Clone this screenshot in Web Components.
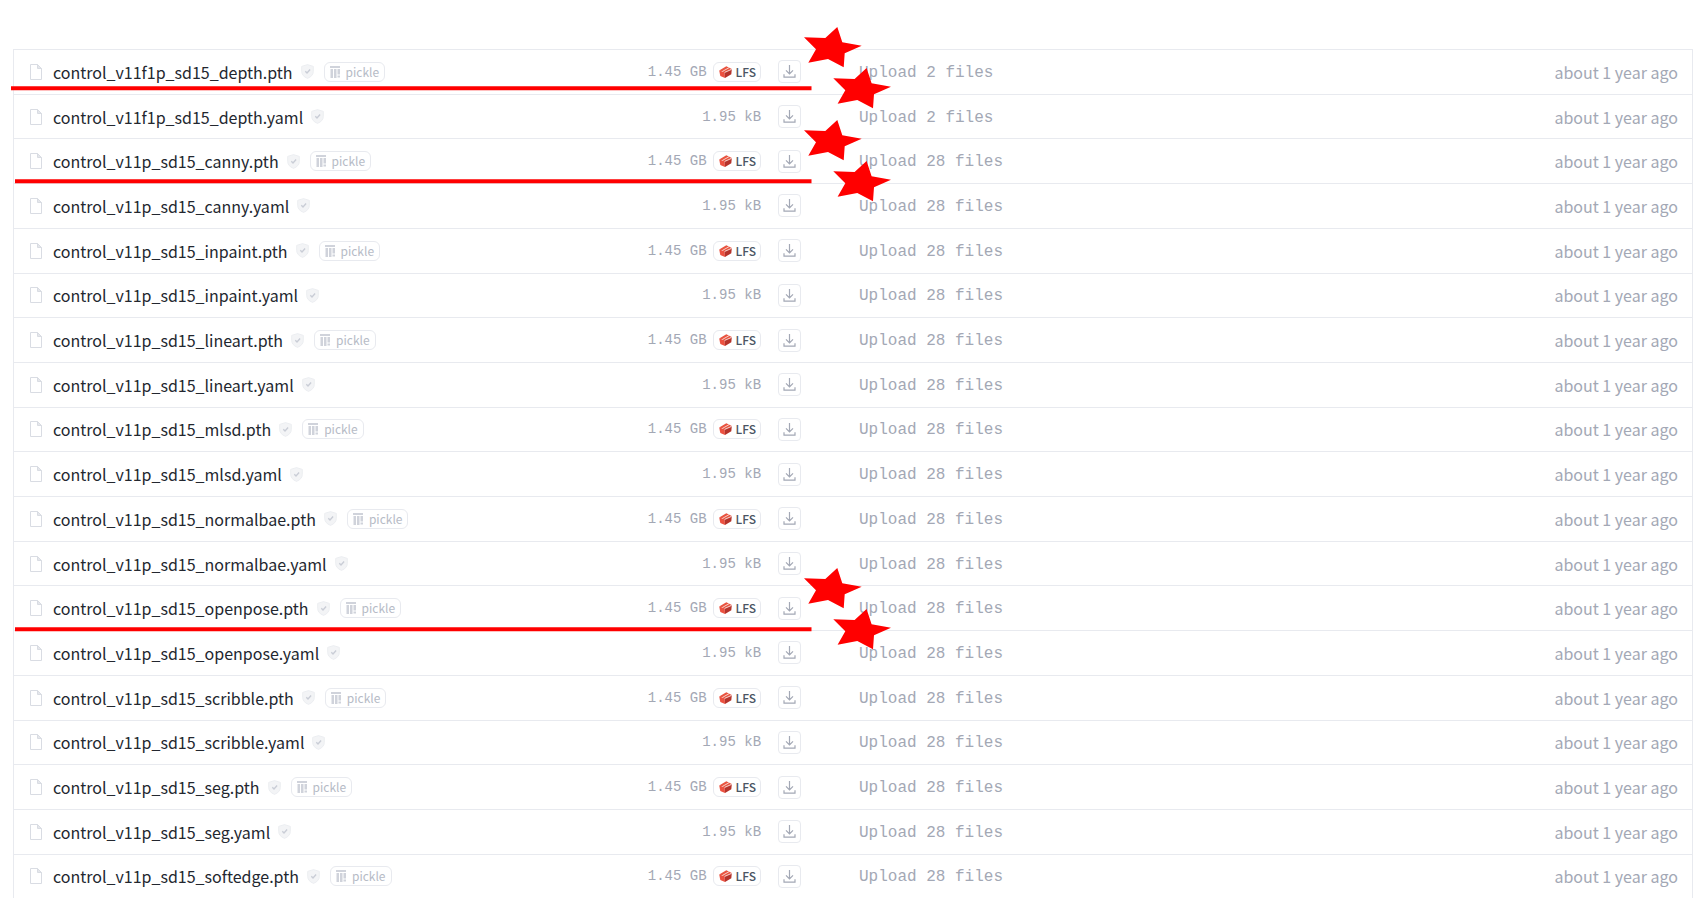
<!DOCTYPE html>
<html lang="en">
<head>
<meta charset="utf-8">
<title>Files</title>
<style>
  body {
    margin: 0;
    padding: 49px 12px 12px 13px;
    background: #fff;
    font-family: "Noto Sans CJK SC", "Open Sans", sans-serif;
  }
</style>
</head>
<body>
<file-list></file-list>
<red-mark style="top: 27px" start="11"></red-mark>
<red-mark style="top: 120px" start="15"></red-mark>
<red-mark style="top: 568px" start="15"></red-mark>

<script>
const define = (name, html) => {
  const template = document.createElement('template');
  template.innerHTML = html;
  customElements.define(name, class extends HTMLElement {
    constructor() {
      super();
      this.attachShadow({ mode: 'open' }).appendChild(template.content.cloneNode(true));
    }
  });
};

define('file-icon', `
  <style>
    :host { display: block; width: 12px; height: 16px; }
    svg { display: block; }
  </style>
  <svg width="12" height="16" viewBox="0 0 12 16" fill="none" stroke="#d9dce3">
    <path d="M.5.5h7l4 4v11H.5z"/>
    <path d="M7.5.5v4h4z" fill="#e5e7eb"/>
  </svg>
`);

define('shield-icon', `
  <style>
    :host { display: block; width: 13px; height: 15px; }
    svg { display: block; }
  </style>
  <svg width="13" height="15" viewBox="0 0 13 15" fill="none">
    <path d="M6.5 .6 12.3 2.4v5q0 4.6-5.8 7Q.7 12 .7 7.400v-5z" fill="#f3f4f6" stroke="#eceef1"/>
    <path d="M4.300 7.200 6 8.900l3.100-3.300" stroke="#c9cdd6" stroke-width="1.400"/>
  </svg>
`);

define('pickle-badge', `
  <style>
    :host {
      display: flex;
      align-items: center;
      gap: 5px;
      height: 18px;
      padding: 0 5px;
      border: 1px solid #e8eaef;
      border-radius: 6px;
      color: #b6bbc6;
      font-size: 12px;
      line-height: 18px;
    }
    svg { display: block; }
  </style>
  <svg width="11" height="12" viewBox="0 0 11 12" fill="#d0d3db">
    <path d="M0 0h10v2H0zM.5 3h2.500v9H.5zM4 3h2.500v9H4zM7.500 3h2.500v5.500H7.500zM7.500 9.500h2.500V11.500H7.500z"/>
  </svg>
  <span><slot></slot></span>
`);

define('lfs-badge', `
  <style>
    :host {
      display: flex;
      align-items: center;
      gap: 4px;
      height: 18px;
      padding: 0 4px 0 5px;
      border: 1px solid #e8eaef;
      border-radius: 6px;
      color: #4b5563;
      font-family: "Noto Sans CJK SC", "Open Sans", sans-serif;
      font-size: 12px;
      font-weight: 500;
      line-height: 18px;
    }
    svg { display: block; }
  </style>
  <svg width="13" height="12" viewBox="0 0 13 12">
    <path d="M.2 4.500 5.600 6.200 6 12 1.300 10z" fill="#ec5140"/>
    <path d="M5.600 6.200 12.800 3 12.300 8.200 6 12z" fill="#b5332b"/>
    <path d="M.2 4.500 7.300 .2 12.800 3 5.600 6.200z" fill="#e95440"/>
    <path d="M3.300 5.500 10 1.700M5.800 6.400 12.600 3.400" stroke="#f8ddd6" stroke-width=".9" fill="none"/>
  </svg>
  <span><slot></slot></span>
`);

define('download-button', `
  <style>
    :host { display: block; }
    button {
      display: flex;
      align-items: center;
      justify-content: center;
      width: 23px;
      height: 23px;
      padding: 0;
      border: 1px solid #e8eaef;
      border-radius: 4px;
      background: #fff;
      cursor: pointer;
    }
  </style>
  <button type="button" aria-label="Download file">
    <svg width="13" height="13" viewBox="0 0 13 13" fill="none" stroke="#a3a8b5" stroke-width="1.200">
      <path d="M6.500 0v8.500M3 5.300l3.500 3.500L10 5.300M1 9.300v2.800h11V9.300"/>
    </svg>
  </button>
`);

// hand-drawn underline with two stars at its right end
const star = '33.3,0 38.3,15.3 57.7,18.7 40.7,26.3 39.7,40.3 24,32 4.3,35.7 12,22.3 0,10.3 21.3,11';
customElements.define('red-mark', class extends HTMLElement {
  connectedCallback() {
    const start = Number(this.getAttribute('start'));
    this.attachShadow({ mode: 'open' }).innerHTML = `
      <style>
        :host {
          position: absolute;
          left: 0;
          pointer-events: none;
        }
        svg { display: block; }
      </style>
      <svg width="900" height="84" viewBox="0 0 900 84" fill="#f00" aria-hidden="true">
        <path d="M${start} 59.2H811.500V63.200H${start}z"/>
        <polygon points="${star}" transform="translate(804 0)"/>
        <polygon points="${star}" transform="translate(833.300 41)"/>
      </svg>
    `;
  }
});

const models = [
  'v11f1p_sd15_depth', 'v11p_sd15_canny', 'v11p_sd15_inpaint', 'v11p_sd15_lineart',
  'v11p_sd15_mlsd', 'v11p_sd15_normalbae', 'v11p_sd15_openpose', 'v11p_sd15_scribble',
  'v11p_sd15_seg', 'v11p_sd15_softedge',
];
const files = models.flatMap((model) => [`control_${model}.pth`, `control_${model}.yaml`]).slice(0, 19);

const row = (name, index) => {
  const pickled = name.endsWith('.pth');
  return `
    <tr>
      <td class="name"><div class="cell">
        <file-icon></file-icon>
        <a href="#${name}">${name}</a>
        <shield-icon></shield-icon>
        ${pickled ? '<pickle-badge>pickle</pickle-badge>' : ''}
      </div></td>
      <td class="size"><div class="cell">
        <span>${pickled ? '1.45 GB' : '1.95 kB'}</span>
        ${pickled ? '<lfs-badge>LFS</lfs-badge>' : ''}
      </div></td>
      <td class="download"><download-button></download-button></td>
      <td class="message"><a href="#commit">Upload ${index < 2 ? 2 : 28} files</a></td>
      <td class="time"><time>about 1 year ago</time></td>
    </tr>
  `;
};

define('file-list', `
  <style>
    :host { display: block; }
    table {
      width: 100%;
      height: calc(100vh - 61px);
      table-layout: fixed;
      border-collapse: collapse;
      border: 1px solid #e8eaef;
      border-bottom: 0;
    }
    td {
      box-sizing: border-box;
      padding: 0;
      line-height: 20px;
      vertical-align: middle;
      white-space: nowrap;
    }
    tr + tr td { border-top: 1px solid #e8eaef; }
    a { color: inherit; text-decoration: none; }
    .cell { display: flex; align-items: center; }
    .name { width: 35%; color: #23272f; font-size: 16px; }
    .name .cell { padding-left: 16px; }
    .name a { margin: 0 8px 0 11px; }
    .name pickle-badge { margin-left: 10px; }
    .size, .message {
      color: #a3a8b5;
      font-family: "Liberation Mono", monospace;
    }
    .size { width: 10%; font-size: 14px; }
    .size .cell { justify-content: flex-end; gap: 6px; padding-right: 8px; }
    .download { width: 5%; }
    download-button { padding-left: 9px; }
    .message { width: 25%; padding: 2px 0 0 6px; font-size: 16px; }
    .time {
      width: 25%;
      padding-right: 14px;
      color: #a3a8b5;
      font-size: 16px;
      text-align: right;
    }
  </style>
  <table aria-label="Repository files">
    <tbody>${files.map(row).join('')}</tbody>
  </table>
`);
</script>
</body>
</html>
